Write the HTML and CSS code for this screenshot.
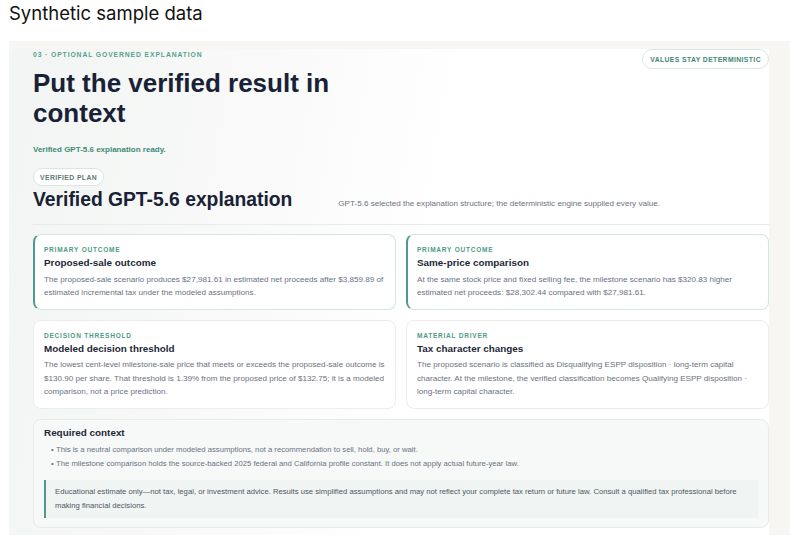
FILE: index.html
```html
<!DOCTYPE html>
<html lang="en">
<head>
    <meta charset="UTF-8">
    <meta name="viewport" content="width=device-width, initial-scale=1.0">
    <title>Verified explanation</title>
    <link rel="stylesheet" href="styles.css">
</head>
<body>
    <div class="caption">Synthetic sample data</div>

    <div class="frame">
        <section class="panel">
            <div class="panel-head">
                <div>
                    <div class="eyebrow">03 · Optional governed explanation</div>
                    <h1 class="title">Put the verified result in<br>context</h1>
                </div>
                <span class="pill pill-strong">Values stay deterministic</span>
            </div>

            <p class="status">Verified GPT-5.6 explanation ready.</p>
            <span class="pill pill-muted">Verified plan</span>

            <div class="plan-row">
                <h2 class="plan-title">Verified GPT-5.6 explanation</h2>
                <p class="plan-note">GPT-5.6 selected the explanation structure; the deterministic engine supplied every value.</p>
            </div>

            <div class="card-grid">
                <div class="card card-primary">
                    <div class="card-label">Primary outcome</div>
                    <h3 class="card-title">Proposed-sale outcome</h3>
                    <p class="card-body">The proposed-sale scenario produces $27,981.61 in estimated net proceeds after $3,859.89 of estimated incremental tax under the modeled assumptions.</p>
                </div>
                <div class="card card-primary">
                    <div class="card-label">Primary outcome</div>
                    <h3 class="card-title">Same-price comparison</h3>
                    <p class="card-body">At the same stock price and fixed selling fee, the milestone scenario has $320.83 higher estimated net proceeds: $28,302.44 compared with $27,981.61.</p>
                </div>
                <div class="card">
                    <div class="card-label">Decision threshold</div>
                    <h3 class="card-title">Modeled decision threshold</h3>
                    <p class="card-body">The lowest cent-level milestone-sale price that meets or exceeds the proposed-sale outcome is $130.90 per share. That threshold is 1.39% from the proposed price of $132.75; it is a modeled comparison, not a price prediction.</p>
                </div>
                <div class="card">
                    <div class="card-label">Material driver</div>
                    <h3 class="card-title">Tax character changes</h3>
                    <p class="card-body">The proposed scenario is classified as Disqualifying ESPP disposition · long-term capital character. At the milestone, the verified classification becomes Qualifying ESPP disposition · long&#8209;term capital character.</p>
                </div>
            </div>

            <div class="context">
                <h3 class="card-title">Required context</h3>
                <ul class="context-list">
                    <li>This is a neutral comparison under modeled assumptions, not a recommendation to sell, hold, buy, or wait.</li>
                    <li>The milestone comparison holds the source-backed 2025 federal and California profile constant. It does not apply actual future-year law.</li>
                </ul>
                <p class="disclaimer">Educational estimate only—not tax, legal, or investment advice. Results use simplified assumptions and may not reflect your complete tax return or future law. Consult a qualified tax professional before making financial decisions.</p>
            </div>
        </section>
    </div>
</body>
</html>
```

FILE: styles.css
```css
body {
    margin: 0;
    background: #ffffff;
    font-family: "Liberation Sans", Arial, sans-serif;
    color: #1b2638;
}
.caption {
    font-family: Inter, "Liberation Sans", sans-serif;
    font-size: 18.5px;
    line-height: 22px;
    padding: 2px 9px 0;
    height: 39px;
    color: #111;
}
.frame {
    margin: 0 16px 0 9px;
    height: 494px;
    padding: 8px 21px 0 0;
    box-sizing: border-box;
    background: #f7f6f3;
    overflow: hidden;
}
.panel {
    height: 100%;
    padding: 0 0 0 24px;
    background: linear-gradient(100deg, #f2f5f3 0%, #f8f9f8 30%, #ffffff 55%);
}
.panel-head {
    display: flex;
    justify-content: space-between;
    align-items: flex-start;
}
.eyebrow {
    font-size: 6.8px;
    line-height: 11px;
    font-weight: 700;
    letter-spacing: 0.13em;
    text-transform: uppercase;
    color: #5a9f90;
}
.title {
    margin: 7.5px 0 0;
    font-size: 26px;
    line-height: 30px;
    font-weight: 700;
    color: #172236;
}
.pill {
    display: flex;
    align-items: center;
    width: max-content;
    border: 1px solid #d9e7e2;
    border-radius: 999px;
    background: #ffffff;
    font-size: 6.8px;
    font-weight: 700;
    letter-spacing: 0.06em;
    text-transform: uppercase;
    box-sizing: border-box;
}
.pill-strong {
    height: 20px;
    padding: 0 7px;
    color: #3f8576;
}
.pill-muted {
    height: 18px;
    padding: 0 6px;
    color: #5b7a73;
}
.status {
    margin: 17.5px 0 13px;
    font-size: 8px;
    line-height: 10px;
    font-weight: 700;
    color: #3f8a79;
}
.plan-row {
    display: flex;
    align-items: baseline;
    gap: 46px;
    padding: 2px 0 12px;
    border-bottom: 1px solid #e7ecea;
}
.plan-title {
    margin: 0;
    font-size: 19.3px;
    line-height: 24px;
    font-weight: 700;
    color: #172236;
}
.plan-note {
    margin: 0;
    font-size: 8.1px;
    color: #6b7280;
}
.card-grid {
    display: grid;
    grid-template-columns: 1fr 1fr;
    gap: 10px;
    margin-top: 9px;
}
.card {
    background: #ffffff;
    border: 1px solid #ebeeec;
    border-radius: 8px;
    padding: 10px 10px 9px;
}
.card-primary {
    border-color: #d3e6e0;
    border-left: 2px solid #4f9a89;
    padding-left: 9px;
}
.card-label {
    font-size: 6.5px;
    line-height: 9px;
    font-weight: 700;
    letter-spacing: 0.12em;
    text-transform: uppercase;
    color: #4f9a89;
}
.card-title {
    margin: 2px 0 0;
    font-size: 9.9px;
    line-height: 13px;
    font-weight: 700;
    color: #1d2736;
}
.card-body {
    margin: 3.5px 0 0;
    font-size: 8.1px;
    line-height: 13.6px;
    color: #6b7280;
}
.context {
    margin-top: 10px;
    background: #f6f9f8;
    border: 1px solid #e6ecea;
    border-radius: 8px;
    padding: 6px 10px 9px;
}
.context .card-title {
    margin: 0;
}
.context-list {
    margin: 4.5px 0 0;
    padding-left: 12px;
    list-style: none;
    font-size: 7.7px;
    line-height: 14px;
    color: #6b7280;
}
.context-list li::before {
    content: "•";
    display: inline-block;
    width: 5px;
    margin-left: -5px;
}
.disclaimer {
    margin: 8.5px 0 0;
    padding: 5.5px 10px 5.5px 9px;
    border-left: 2px solid #4f9a89;
    background: #f0f5f3;
    font-size: 7.7px;
    line-height: 13.5px;
    color: #4e5563;
}
```
